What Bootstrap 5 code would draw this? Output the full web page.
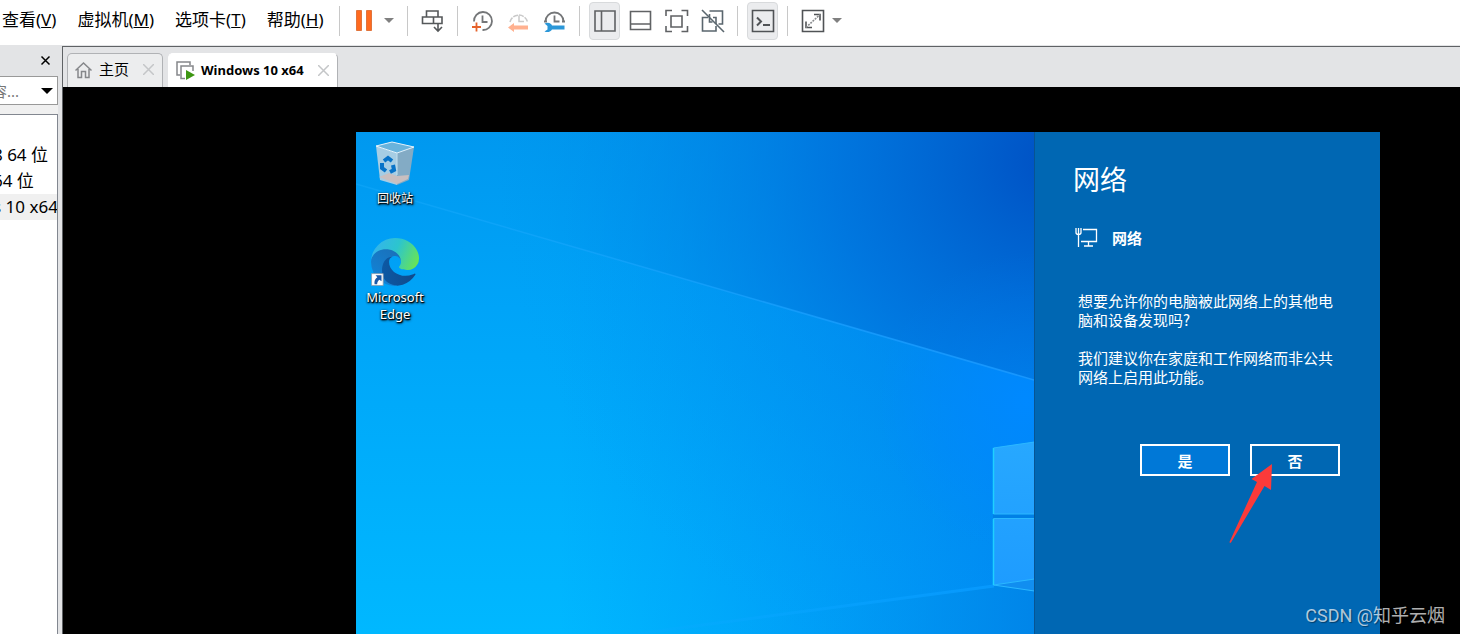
<!DOCTYPE html>
<html lang="zh-CN">
<head>
<meta charset="utf-8">
<meta name="viewport" content="width=device-width, initial-scale=1">
<title>Windows 10 x64</title>
<link href="https://cdn.jsdelivr.net/npm/bootstrap@5.3.0/dist/css/bootstrap.min.css" rel="stylesheet">
<script src="https://cdn.jsdelivr.net/npm/bootstrap@5.3.0/dist/js/bootstrap.bundle.min.js" defer></script>
<style>
  body { font-family: "Noto Sans", "Noto Sans CJK SC", sans-serif; color: #000; background: #fff; }
  svg { display: block; flex: none; }
  button { color: inherit; }

  /* menu and toolbar */
  .menu-row { height: 45px; }
  .menu-links { gap: 21px; padding-left: 2px; width: 339px; padding-bottom: 6px; font-size: 17px; line-height: 24px; }
  .menu-links a { color: #000; text-decoration: none; white-space: nowrap; }
  .tool { width: 31px; height: 38px; padding: 0; border: 1px solid transparent; border-radius: 4px; background: none; display: flex; align-items: center; justify-content: center; }
  .tool.on { background: #ebecee; border-color: #d8dadc; }
  .tool-more { width: 18px; }
  .tool-group { gap: 5px; }
  .rule { width: 1px; height: 30px; background: #c8c8c8; margin: 0 9px; flex: none; }

  /* library panel */
  .lower { background: #e3e4e6; }
  .library { width: 62px; padding-right: 4px; overflow: hidden; }
  .library-head { height: 31px; padding-right: 7px; }
  .plain { border: 0; background: none; padding: 0; }
  .search-box { height: 29px; border: 1px solid #999; border-left: 0; background: #fff; }
  .search-box input { width: 30px; margin-left: -8px; border: 0; padding: 0; font-size: 15px; line-height: 20px; color: #777; background: none; }
  .search-box input::placeholder { color: #777; opacity: 1; }
  .search-gap { height: 9px; background: #f0f0f0; }
  .vm-list { border: 1px solid #828790; border-left: 0; background: #fff; padding-top: 27px; font-size: 17px; line-height: 26px; }
  .vm-list li { overflow: hidden; white-space: nowrap; }
  .vm-list a { color: #000; text-decoration: none; margin-left: -7px; }
  .vm-list li.current { background: #f0f0f0; }

  /* tabs */
  .work { border-left: 1px solid #5f6265; border-top: 1px solid #5f6265; margin-top: 1px; background: #000; min-width: 0; }
  .tab-row { height: 40px; background: #e3e4e6; gap: 5px; padding-left: 4px; }
  .vm-tab { height: 34px; border: 1px solid #b0b2b5; border-bottom: 0; border-radius: 5px 5px 0 0; background: #ecedee; padding: 0 8px 2px 7px; font-size: 15px; gap: 6px; }
  .vm-tab.current { background: #fff; border-left-color: #fff; border-top-color: #fff; padding-bottom: 0; font-size: 13px; font-weight: 700; }
  .tab-close { margin-left: 8px; }

  /* guest screen */
  .guest { padding: 45px 80px 0 293px; }
  .wallpaper { background: #009ff5; overflow: hidden; }
  .wallpaper > svg { position: absolute; inset: 0; width: 100%; height: 100%; }
  .shortcuts { width: 78px; padding-top: 9px; gap: 31px; }
  .shortcuts a { color: #fff; text-decoration: none; font-size: 12px; line-height: 17px; text-align: center; text-shadow: 1px 1px 1px #000, 0 1px 2px #000, 1px 1px 3px #000; gap: 3px; }
  .shortcuts .wide-label { font-size: 13px; }
  .flyout { width: 346px; background: #0067b3; border-left: 1px solid #075493; color: #fff; padding: 29px 40px 0 38px; font-family: "Noto Sans CJK SC", sans-serif; font-size: 15px; line-height: 19px; }
  .flyout h1 { font-size: 27px; line-height: 36px; font-weight: 400; margin: 0; }
  .flyout h2 { font-size: 15px; line-height: 20px; font-weight: 700; margin: 0; }
  .flyout-name { gap: 14px; margin: 31px 0 43px; padding-left: 2px; }
  .flyout-text { padding-left: 5px; }
  .flyout-text p { margin-bottom: 19px; }
  .answers { gap: 20px; margin-top: 58px; }
  .answer { width: 90px; height: 32px; border: 2px solid #fff; background: transparent; color: #fff; font-weight: 700; padding: 0; }
  .answer.first { background: #0078d7; }
  .pointer { position: absolute; left: -22px; top: 19px; pointer-events: none; }
  .watermark { position: absolute; right: 15px; bottom: 5px; font-family: Roboto, "Noto Sans CJK SC", sans-serif; font-size: 18px; line-height: 26px; color: rgba(255,255,255,.7); text-shadow: 1px 1px 1px rgba(0,0,0,.4); white-space: nowrap; }
</style>
</head>
<body>
<div class="d-flex flex-column min-vh-100 position-relative overflow-hidden">

  <header class="menu-row d-flex align-items-center flex-shrink-0">
    <nav class="menu-links d-flex flex-shrink-0" aria-label="菜单">
      <a href="#">查看(<u>V</u>)</a>
      <a href="#">虚拟机(<u>M</u>)</a>
      <a href="#">选项卡(<u>T</u>)</a>
      <a href="#">帮助(<u>H</u>)</a>
    </nav>
    <div class="d-flex align-items-center pb-1" role="toolbar" aria-label="工具栏">
      <span class="rule ms-0"></span>
      <button class="tool" aria-label="挂起"><svg width="24" height="24"><path d="M3.500 1.500h5v20h-5zM13.500 1.500h5v20h-5z" fill="#ff6a1f" stroke="#e0743c"/></svg></button>
      <button class="tool tool-more" aria-label="电源选项"><svg width="10" height="5"><path d="M0 0h10L5 5z" fill="#808080"/></svg></button>
      <span class="rule"></span>
      <button class="tool" aria-label="发送按键"><svg width="24" height="24" fill="none" stroke="#55585a" stroke-width="1.600"><path d="M5.500 2h11.500v6h-11.500zM1.500 8h19.500v6.500h-19.500zM12.500 8v6.500M17 14v8M13 18l4 4 4-4"/></svg></button>
      <span class="rule"></span>
      <div class="tool-group d-flex">
        <button class="tool" aria-label="拍摄快照"><svg width="24" height="24" fill="none" stroke="#747678" stroke-width="1.800"><path d="M3 12.500a9 9 0 1 1 8.500 8.500M11.500 6.500v6.500h5"/><path d="M5.500 13.500v9M1 18h9" stroke="#e5622b"/></svg></button>
        <button class="tool" aria-label="恢复快照"><svg width="24" height="24" fill="none" stroke="#c9c9c9" stroke-width="1.500"><path d="M3 13a9 9 0 0 1 17.500 0" stroke-dasharray="5 1"/><path d="M12 6.500v6h5"/><path d="M1 18.500l6-4.500v2.500h14v4H7V23z" fill="#ffb190" stroke="none"/></svg></button>
        <button class="tool" aria-label="管理快照"><svg width="24" height="24" fill="none" stroke="#747678" stroke-width="1.800"><path d="M2.500 12.500a9 9 0 0 1 18 0M11.500 6.500v6h5M1 12.500h3M19 12.500h3"/><path d="M1.500 14.500c4-2 7 0 7.500 2h12.500v4H9c-1 2-4 3.500-7.500 2l3-2v-3.500z" fill="#2b97d8" stroke="none"/></svg></button>
      </div>
      <span class="rule"></span>
      <div class="tool-group d-flex">
        <button class="tool on" aria-label="显示库"><svg width="24" height="24" fill="none" stroke="#606264" stroke-width="1.600"><path d="M2 2h20v20H2zM8.500 2v20"/></svg></button>
        <button class="tool" aria-label="显示缩略图"><svg width="24" height="24" fill="none" stroke="#606264" stroke-width="1.600"><path d="M1.500 2.500h20v18h-20zM1.500 15h20"/></svg></button>
        <button class="tool" aria-label="全屏"><svg width="24" height="24" fill="none" stroke="#606264" stroke-width="1.600"><path d="M6 7h11v11H6zM1 7V1.500h6M16.500 1.500h6V7M22.500 17v5.500h-6M7 22.500H1V17"/></svg></button>
        <button class="tool" aria-label="Unity"><svg width="24" height="24" fill="none" stroke="#5a666e" stroke-width="1.600"><path d="M8.500 2h13v13h-4M7 8.500H1.500V22H15v-5M8.500 5v8h3M15 15V8.500h-3"/><path d="M1 1l22 22"/></svg></button>
      </div>
      <span class="rule"></span>
      <button class="tool on" aria-label="控制台视图"><svg width="24" height="24" fill="none" stroke="#505356" stroke-width="1.600"><path d="M1.500 1.500h21v21h-21z"/><path d="M6 8.500l4 4-4 4M12 16h7" stroke-width="2"/></svg></button>
      <span class="rule"></span>
      <button class="tool" aria-label="拉伸"><svg width="24" height="24" fill="none" stroke="#505356" stroke-width="1.600"><path d="M1.500 1.500h21v21h-21zM13 5.500h6v6M11 18.500H5v-6"/><path d="M5 18.500l14-13" stroke="#8a8c8e" stroke-dasharray="2 1"/></svg></button>
      <button class="tool tool-more" aria-label="拉伸选项"><svg width="10" height="5"><path d="M0 0h10L5 5z" fill="#808080"/></svg></button>
    </div>
  </header>

  <div class="lower d-flex flex-grow-1">
    <aside class="library d-flex flex-column flex-shrink-0">
      <div class="library-head d-flex align-items-center justify-content-end">
        <button class="plain" aria-label="关闭库"><svg width="11" height="11"><path d="M1.500 1.500l8 8M9.500 1.500l-8 8" stroke="#000" stroke-width="1.500"/></svg></button>
      </div>
      <div class="search-box d-flex align-items-center justify-content-between flex-shrink-0 pe-1">
        <input type="text" placeholder="容..." aria-label="搜索">
        <button class="plain" aria-label="筛选"><svg width="12" height="6"><path d="M0 0h12L6 6z"/></svg></button>
      </div>
      <div class="search-gap"></div>
      <ul class="vm-list list-unstyled flex-grow-1 mb-0 border-bottom-0">
        <li><a href="#">8 64 位</a></li>
        <li><a href="#">64 位</a></li>
        <li class="current"><a href="#">s 10 x64</a></li>
      </ul>
    </aside>

    <main class="work flex-grow-1 d-flex flex-column">
      <div class="tab-row d-flex align-items-end flex-shrink-0">
        <div class="vm-tab d-flex align-items-center">
          <svg width="18" height="18" fill="none" stroke="#85878a" stroke-width="1.500"><path d="M.5 9.500L8.500 2l8 7.500M3 8v8.500h3.500v-6h4v6H14V8"/></svg>
          <span>主页</span>
          <button class="plain tab-close" aria-label="关闭主页"><svg width="11" height="11"><path d="M0 0l11 11M11 0L0 11" stroke="#c4c6c8" stroke-width="1.500"/></svg></button>
        </div>
        <div class="vm-tab current d-flex align-items-center">
          <svg width="19" height="19"><path d="M4 14H1V1h13v3" fill="none" stroke="#85878a" stroke-width="1.500"/><path d="M9 17.500H5V5h12v5" fill="none" stroke="#85878a" stroke-width="1.500"/><path d="M10 9l9 5-9 5z" fill="#3d9612"/></svg>
          <span>Windows 10 x64</span>
          <button class="plain tab-close" aria-label="关闭 Windows 10 x64"><svg width="11" height="11"><path d="M0 0l11 11M11 0L0 11" stroke="#c4c6c8" stroke-width="1.500"/></svg></button>
        </div>
      </div>

      <div class="guest flex-grow-1 d-flex">
        <div class="wallpaper position-relative flex-grow-1">
          <svg viewBox="0 0 678 502" preserveAspectRatio="none" aria-hidden="true">
            <defs>
              <linearGradient id="base" x1="0" y1="0" x2="0" y2="1"><stop offset="0" stop-color="#0098ef"/><stop offset=".35" stop-color="#00a4f8"/><stop offset="1" stop-color="#00b8ff"/></linearGradient>
              <linearGradient id="side" x1="0" x2="1"><stop offset=".3" stop-color="#008ef2" stop-opacity="0"/><stop offset="1" stop-color="#008af4"/></linearGradient>
              <radialGradient id="dark" gradientUnits="userSpaceOnUse" cx="700" cy="30" r="560" gradientTransform="scale(1 .95)"><stop offset="0" stop-color="#0050c4"/><stop offset=".15" stop-color="#005ecc" stop-opacity=".95"/><stop offset=".4" stop-color="#0070da" stop-opacity=".8"/><stop offset=".65" stop-color="#0082e2" stop-opacity=".55"/><stop offset="1" stop-color="#0092ea" stop-opacity="0"/></radialGradient>
              <radialGradient id="glow" gradientUnits="userSpaceOnUse" cx="670" cy="270" r="150"><stop offset="0" stop-color="#0089ff"/><stop offset="1" stop-color="#0089ff" stop-opacity="0"/></radialGradient>
              <linearGradient id="pane" x1="0" y1="0" x2="0" y2="1"><stop offset="0" stop-color="#27a8ff"/><stop offset="1" stop-color="#1e9cff"/></linearGradient>
              <linearGradient id="ray" x1="0" x2="1"><stop offset="0" stop-color="#20b0ff" stop-opacity=".3"/><stop offset="1" stop-color="#1a98ff" stop-opacity=".9"/></linearGradient>
              <linearGradient id="ground" x1="0" x2="1"><stop offset="0" stop-color="#08b0ff" stop-opacity=".2"/><stop offset="1" stop-color="#089aff" stop-opacity=".9"/></linearGradient>
              <linearGradient id="floor" x1="0" x2="1"><stop offset="0" stop-color="#00b0ff" stop-opacity="0"/><stop offset="1" stop-color="#0084e6" stop-opacity=".8"/></linearGradient>
            </defs>
            <path fill="url(#base)" d="M0 0h678v502H0z"/>
            <path fill="url(#side)" d="M0 0h678v502H0z"/>
            <path fill="url(#dark)" d="M0 0h678v248L0 52z"/>
            <path fill="url(#dark)" opacity=".3" d="M0 52l678 196v254H0z"/>
            <path fill="url(#glow)" opacity=".3" d="M400 0h278v248l-278-80z"/>
            <path fill="url(#glow)" d="M400 168l278 80v254H400z"/>
            <path fill="url(#floor)" d="M290 502l348-48 40 5v43z"/>
            <path d="M0 52l678 196" stroke="url(#ray)" stroke-width="1.500" fill="none"/>
            <path d="M220 510l418-56" stroke="url(#ground)" stroke-width="3" fill="none"/>
            <path fill="#0080e6" d="M637 382h41v5h-41z"/>
            <path fill="url(#pane)" d="M637 316l41-6v72h-41zM637 387h41v64l-41 2z"/>
            <path fill="#118ef0" d="M637 453l41-6v12z"/>
            <path d="M637.500 382v-66l41-6M637.500 382h41M678 386.500h-40.500V453l41 6" fill="none" stroke="#2bb8ff" stroke-width="1"/>
            <path d="M637.500 453l41-6" stroke="#2bb8ff"/>
            <path d="M637.500 316v66M637.500 387v66" stroke="#1fd0ff" stroke-width="1.500"/>
          </svg>
          <div class="shortcuts d-flex flex-column position-relative">
            <a href="#" class="d-flex flex-column align-items-center">
              <svg width="40" height="46" viewBox="0 0 40 46">
                <path d="M1 5l21 7v32L5 39z" fill="#a6cde4"/><path d="M22 12l17-6-5 33-12 5z" fill="#83abc5"/>
                <path d="M1 5L17 1l22 5-17 6z" fill="#69b3dc" stroke="#e6f2fa"/><path d="M22 12v22" stroke="#c4dfef"/>
                <path d="M4 36l10-4 8 3 12-1-1 4-11 5z" fill="#c9bfc0"/>
                <g fill="none" stroke="#0873c8" stroke-width="4"><path d="M9 20l4-3 4 3"/><path d="M18 24l1 5-4 2"/><path d="M7 22l0 5 4 3"/></g>
              </svg>
              <span>回收站</span>
            </a>
            <a href="#" class="d-flex flex-column align-items-center wide-label">
              <svg width="48" height="48" viewBox="0 0 256 256">
                <defs>
                  <linearGradient id="e1" x1="0" x2="1"><stop offset="0" stop-color="#0c59a4"/><stop offset="1" stop-color="#114a8b"/></linearGradient>
                  <linearGradient id="e2" x1=".8" y1="0" x2=".2" y2="1"><stop offset="0" stop-color="#1b6fb8"/><stop offset="1" stop-color="#1086da"/></linearGradient>
                  <linearGradient id="e3" x1="0" y1=".3" x2="1" y2=".6"><stop offset="0" stop-color="#35b3ee"/><stop offset=".5" stop-color="#2cc5ce"/><stop offset="1" stop-color="#66e35a"/></linearGradient>
                </defs>
                <path fill="url(#e2)" d="M105.700 241.500a79.200 79.200 0 0 1-22.700-21.300 80.700 80.700 0 0 1 29.600-120c3.100-1.500 8.500-4.100 15.600-4a32.400 32.400 0 0 1 25.700 13 31.900 31.900 0 0 1 6.300 18.700c0-.2 24.500-79.600-80-79.600-43.900 0-80 41.700-80 78.200a130.200 130.200 0 0 0 12.100 56 128 128 0 0 0 156.400 67 75.500 75.500 0 0 1-62.800-8z"/>
                <path fill="url(#e1)" d="M231.100 190.500a93.500 93.500 0 0 1-10.500 4.700 101.900 101.900 0 0 1-35.900 6.500c-47.300 0-88.500-32.500-88.500-74.300a31.500 31.500 0 0 1 16.400-27.300c-42.800 1.800-53.800 46.400-53.800 72.500 0 74 68.100 81.400 82.800 81.400 7.900 0 19.800-2.300 27-4.600l1.300-.4a128.300 128.300 0 0 0 66.600-52.800 4 4 0 0 0-5.400-5.700z"/>
                <path fill="url(#e3)" d="M152.300 148.900c-.8 1-3.300 2.500-3.300 5.700 0 2.600 1.700 5.100 4.700 7.200 14.400 10 41.500 8.700 41.600 8.700a59.600 59.600 0 0 0 30.300-8.300 61.400 61.400 0 0 0 30.400-52.900c.3-22.400-8-37.300-11.300-43.900C223.500 23.900 177.700 0 128 0A128 128 0 0 0 0 126.200c.5-36.500 36.800-66 80-66 3.500 0 23.500.3 42 10.100 16.300 8.600 24.900 19 30.800 29.200 6.200 10.700 7.300 24.100 7.300 29.500s-2.700 13.300-7.800 19.900z"/>
                <path fill="#fff" stroke="#8a9aa8" stroke-width="4" d="M3 190h62v63H3z"/>
                <path fill="#1b5aa8" d="M24 198h32v33l-11-9c-10 7-12 15-12 25H19c-3-18 3-30 15-38z"/>
              </svg>
              <span>Microsoft<br>Edge</span>
            </a>
          </div>
        </div>

        <section class="flyout flex-shrink-0">
          <h1>网络</h1>
          <div class="flyout-name d-flex align-items-center">
            <svg width="23" height="20" fill="none" stroke="#fff" stroke-width="1.300"><path d="M8 1.500h13.500v12H6M13.500 13.500V18M9 18h9M3.500 7v12M1 0v4.500c0 1 1 2 2.500 2s2.500-1 2.500-2V0M3.500 0v6"/></svg>
            <h2>网络</h2>
          </div>
          <div class="flyout-text">
            <p>想要允许你的电脑被此网络上的其他电脑和设备发现吗?</p>
            <p>我们建议你在家庭和工作网络而非公共网络上启用此功能。</p>
          </div>
          <div class="answers d-flex justify-content-end">
            <button class="answer first">是</button>
            <div class="position-relative">
              <button class="answer">否</button>
              <svg class="pointer" width="46" height="82" aria-hidden="true"><path d="M44 1L23.500 16l5.500 3L1.500 79l.5 1 1-.5L36.500 23l6.500 4z" fill="#fb3a3a"/></svg>
            </div>
          </div>
        </section>
      </div>
    </main>
  </div>

  <div class="watermark">CSDN @知乎云烟</div>
</div>
</body>
</html>
